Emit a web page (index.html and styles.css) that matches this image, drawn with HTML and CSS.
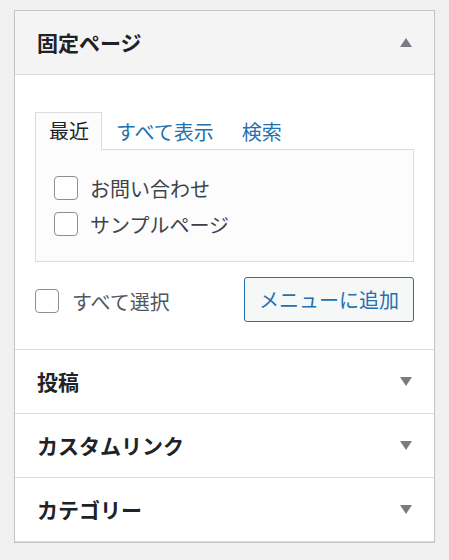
FILE: index.html
```html
<!DOCTYPE html>
<html lang="ja">
<head>
<meta charset="utf-8">
<title>メニュー項目を追加</title>
<link rel="stylesheet" href="styles.css">
</head>
<body>
<div class="panel">
  <div class="section open">
    <div class="title">
      <h3>固定ページ</h3>
      <svg class="arrow" width="12" height="9" viewBox="0 0 12 9"><path d="M0 9 L6 0 L12 9 Z"/></svg>
    </div>
    <div class="content">
      <div class="tabs">
        <span class="tab active">最近</span>
        <span class="tab">すべて表示</span>
        <span class="tab">検索</span>
      </div>
      <div class="tab-panel">
        <ul class="items">
          <li><input type="checkbox" class="cb"><span>お問い合わせ</span></li>
          <li><input type="checkbox" class="cb"><span>サンプルページ</span></li>
        </ul>
      </div>
      <div class="actions">
        <label class="select-all"><input type="checkbox" class="cb"><span>すべて選択</span></label>
        <button class="btn">メニューに追加</button>
      </div>
    </div>
  </div>
  <div class="section">
    <div class="title">
      <h3>投稿</h3>
      <svg class="arrow" width="12" height="9" viewBox="0 0 12 9"><path d="M0 0 L12 0 L6 9 Z"/></svg>
    </div>
  </div>
  <div class="section">
    <div class="title">
      <h3>カスタムリンク</h3>
      <svg class="arrow" width="12" height="9" viewBox="0 0 12 9"><path d="M0 0 L12 0 L6 9 Z"/></svg>
    </div>
  </div>
  <div class="section">
    <div class="title">
      <h3>カテゴリー</h3>
      <svg class="arrow" width="12" height="9" viewBox="0 0 12 9"><path d="M0 0 L12 0 L6 9 Z"/></svg>
    </div>
  </div>
</div>
</body>
</html>
```

FILE: styles.css
```css
html, body {
  margin: 0;
  background: #f0f0f1;
}
body {
  padding: 10px 14px 0;
  font-family: "Noto Sans CJK JP", "Noto Sans", sans-serif;
  color: #3c434a;
}
.panel {
  background: #fff;
  border: 1px solid #c3c4c7;
  box-shadow: 0 1px 1px rgba(0, 0, 0, 0.04);
}
.title {
  height: 63px;
  display: flex;
  align-items: center;
  justify-content: space-between;
  padding: 0 22px;
  border-bottom: 1px solid #dcdcde;
}
.section.open .title {
  background: #f4f4f4;
}
.title h3 {
  margin: 0;
  font-size: 21px;
  font-weight: 700;
  color: #1d2327;
  line-height: 1;
}
.arrow {
  fill: #787c82;
  display: block;
}
.content {
  padding: 37px 20px 27px;
  border-bottom: 1px solid #dcdcde;
}
.tabs {
  display: flex;
  align-items: flex-end;
  height: 38px;
  position: relative;
  z-index: 1;
  margin-bottom: -1px;
}
.tab {
  font-size: 20px;
  line-height: 36px;
  padding: 0 14px;
  color: #2271b1;
}
.tab.active {
  color: #1d2327;
  padding: 0 12px 0 13px;
  height: 38px;
  box-sizing: border-box;
  border: 1px solid #dcdcde;
  border-bottom: none;
  background: #fcfcfc;
}
.tab-panel {
  border: 1px solid #dcdcde;
  background: #fcfcfc;
  padding: 20px 18px 19px;
}
.items {
  list-style: none;
  margin: 0;
  padding: 0;
}
.items li {
  height: 36px;
  display: flex;
  align-items: center;
  gap: 12px;
  font-size: 20px;
}
.cb {
  appearance: none;
  -webkit-appearance: none;
  width: 24px;
  height: 24px;
  margin: 0;
  border: 1px solid #8c8f94;
  border-radius: 4px;
  background: #fff;
  flex: none;
}
.actions {
  margin-top: 15px;
  display: flex;
  align-items: center;
  justify-content: space-between;
}
.select-all {
  display: flex;
  align-items: center;
  gap: 13px;
  font-size: 20px;
  color: #50575e;
  margin-top: 3px;
}
.btn {
  font-family: inherit;
  font-size: 20px;
  width: 170px;
  height: 45px;
  padding: 0;
  color: #2271b1;
  background: #f6f7f7;
  border: 1px solid #2271b1;
  border-radius: 3px;
}
```
